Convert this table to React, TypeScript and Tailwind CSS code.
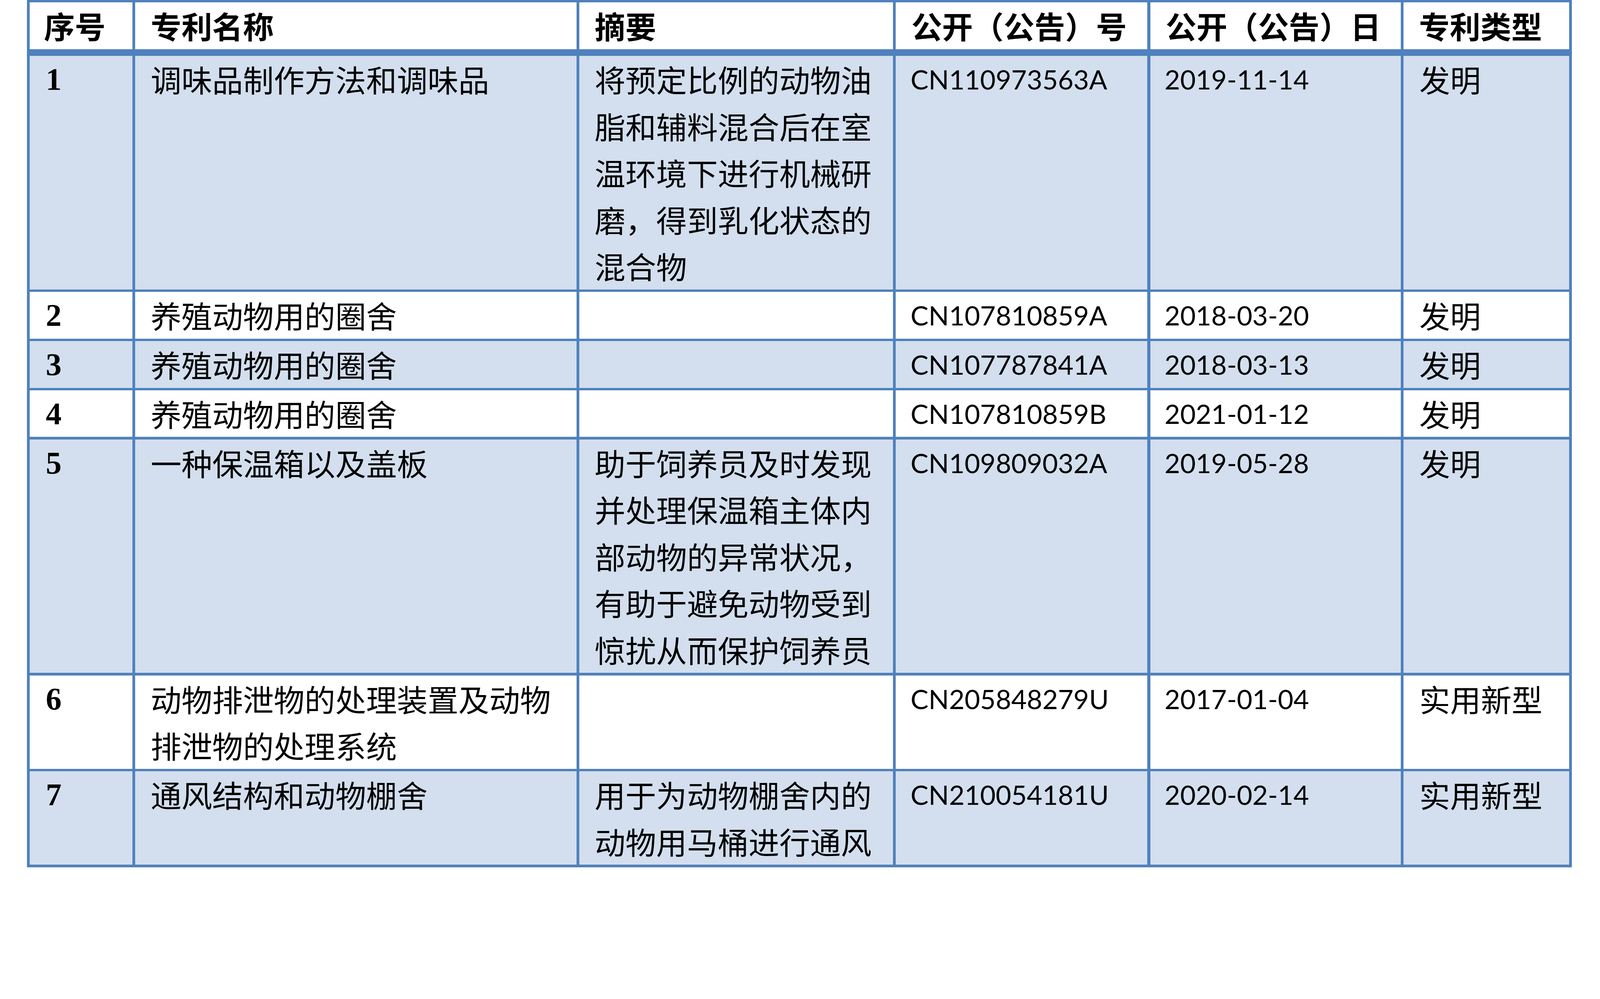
import React from 'react';

interface PatentRow {
    no: string;
    name: string[];
    summary: string[];
    pubNo: string;
    pubDate: string;
    kind: string;
}

const ROWS: PatentRow[] = [
    {
        no: '1',
        name: ['调味品制作方法和调味品'],
        summary: ['将预定比例的动物油', '脂和辅料混合后在室', '温环境下进行机械研', '磨，得到乳化状态的', '混合物'],
        pubNo: 'CN110973563A',
        pubDate: '2019-11-14',
        kind: '发明',
    },
    { no: '2', name: ['养殖动物用的圈舍'], summary: [], pubNo: 'CN107810859A', pubDate: '2018-03-20', kind: '发明' },
    { no: '3', name: ['养殖动物用的圈舍'], summary: [], pubNo: 'CN107787841A', pubDate: '2018-03-13', kind: '发明' },
    { no: '4', name: ['养殖动物用的圈舍'], summary: [], pubNo: 'CN107810859B', pubDate: '2021-01-12', kind: '发明' },
    {
        no: '5',
        name: ['一种保温箱以及盖板'],
        summary: ['助于饲养员及时发现', '并处理保温箱主体内', '部动物的异常状况，', '有助于避免动物受到', '惊扰从而保护饲养员'],
        pubNo: 'CN109809032A',
        pubDate: '2019-05-28',
        kind: '发明',
    },
    {
        no: '6',
        name: ['动物排泄物的处理装置及动物', '排泄物的处理系统'],
        summary: [],
        pubNo: 'CN205848279U',
        pubDate: '2017-01-04',
        kind: '实用新型',
    },
    {
        no: '7',
        name: ['通风结构和动物棚舍'],
        summary: ['用于为动物棚舍内的', '动物用马桶进行通风'],
        pubNo: 'CN210054181U',
        pubDate: '2020-02-14',
        kind: '实用新型',
    },
];

const HEADERS = ['序号', '专利名称', '摘要', '公开（公告）号', '公开（公告）日', '专利类型'];

const GRID = 'grid grid-cols-[262.9px_1129.3px_803.3px_643.9px_641.1px_424.1px] gap-x-[7.33px]';
const CJK = "font-['Noto_Sans_CJK_SC',sans-serif] text-[78.8px] leading-[119.5px] text-black";
const LATIN = "font-['Lato',sans-serif] text-[68.7px] leading-[119.5px] text-black";

function Lines({ lines }: { lines: string[] }) {
    return (
        <>
            {lines.map((l, i) => (
                <div key={i} className="whitespace-nowrap">
                    {l}
                </div>
            ))}
        </>
    );
}

export default function App() {
    return (
        <div className="bg-white w-full min-h-screen pl-[68.7px]">
            <div className="w-[3955px] bg-[#4f81bd] pt-[6.4px] pb-[7.33px] pl-[7.33px] pr-[6.4px] flex flex-col gap-y-[6.4px]">
                {/* Header */}
                <div className={`${GRID} mb-[11px]`}>
                    {HEADERS.map((h, i) => (
                        <div key={h} className={`bg-white ${CJK} font-bold whitespace-nowrap ${i === 0 ? 'pl-[36.6px]' : 'pl-[39.4px]'}`}>
                            {h}
                        </div>
                    ))}
                </div>

                {ROWS.map((row, idx) => {
                    const bg = idx % 2 === 0 ? 'bg-[#d3dfee]' : 'bg-white';
                    return (
                        <div key={row.no} className={GRID}>
                            <div className={`${bg} pl-[41.2px] font-['Liberation_Serif',serif] font-bold text-[80.6px] leading-[119.5px] text-black`}>
                                {row.no}
                            </div>
                            <div className={`${bg} pl-[39.4px] ${CJK}`}>
                                <Lines lines={row.name} />
                            </div>
                            <div className={`${bg} pl-[39.4px] ${CJK}`}>
                                <Lines lines={row.summary} />
                            </div>
                            <div className={`${bg} pl-[37.6px] ${LATIN}`}>{row.pubNo}</div>
                            <div className={`${bg} pl-[36.6px] ${LATIN}`}>{row.pubDate}</div>
                            <div className={`${bg} pl-[40.3px] ${CJK}`}>{row.kind}</div>
                        </div>
                    );
                })}
            </div>
        </div>
    );
}
